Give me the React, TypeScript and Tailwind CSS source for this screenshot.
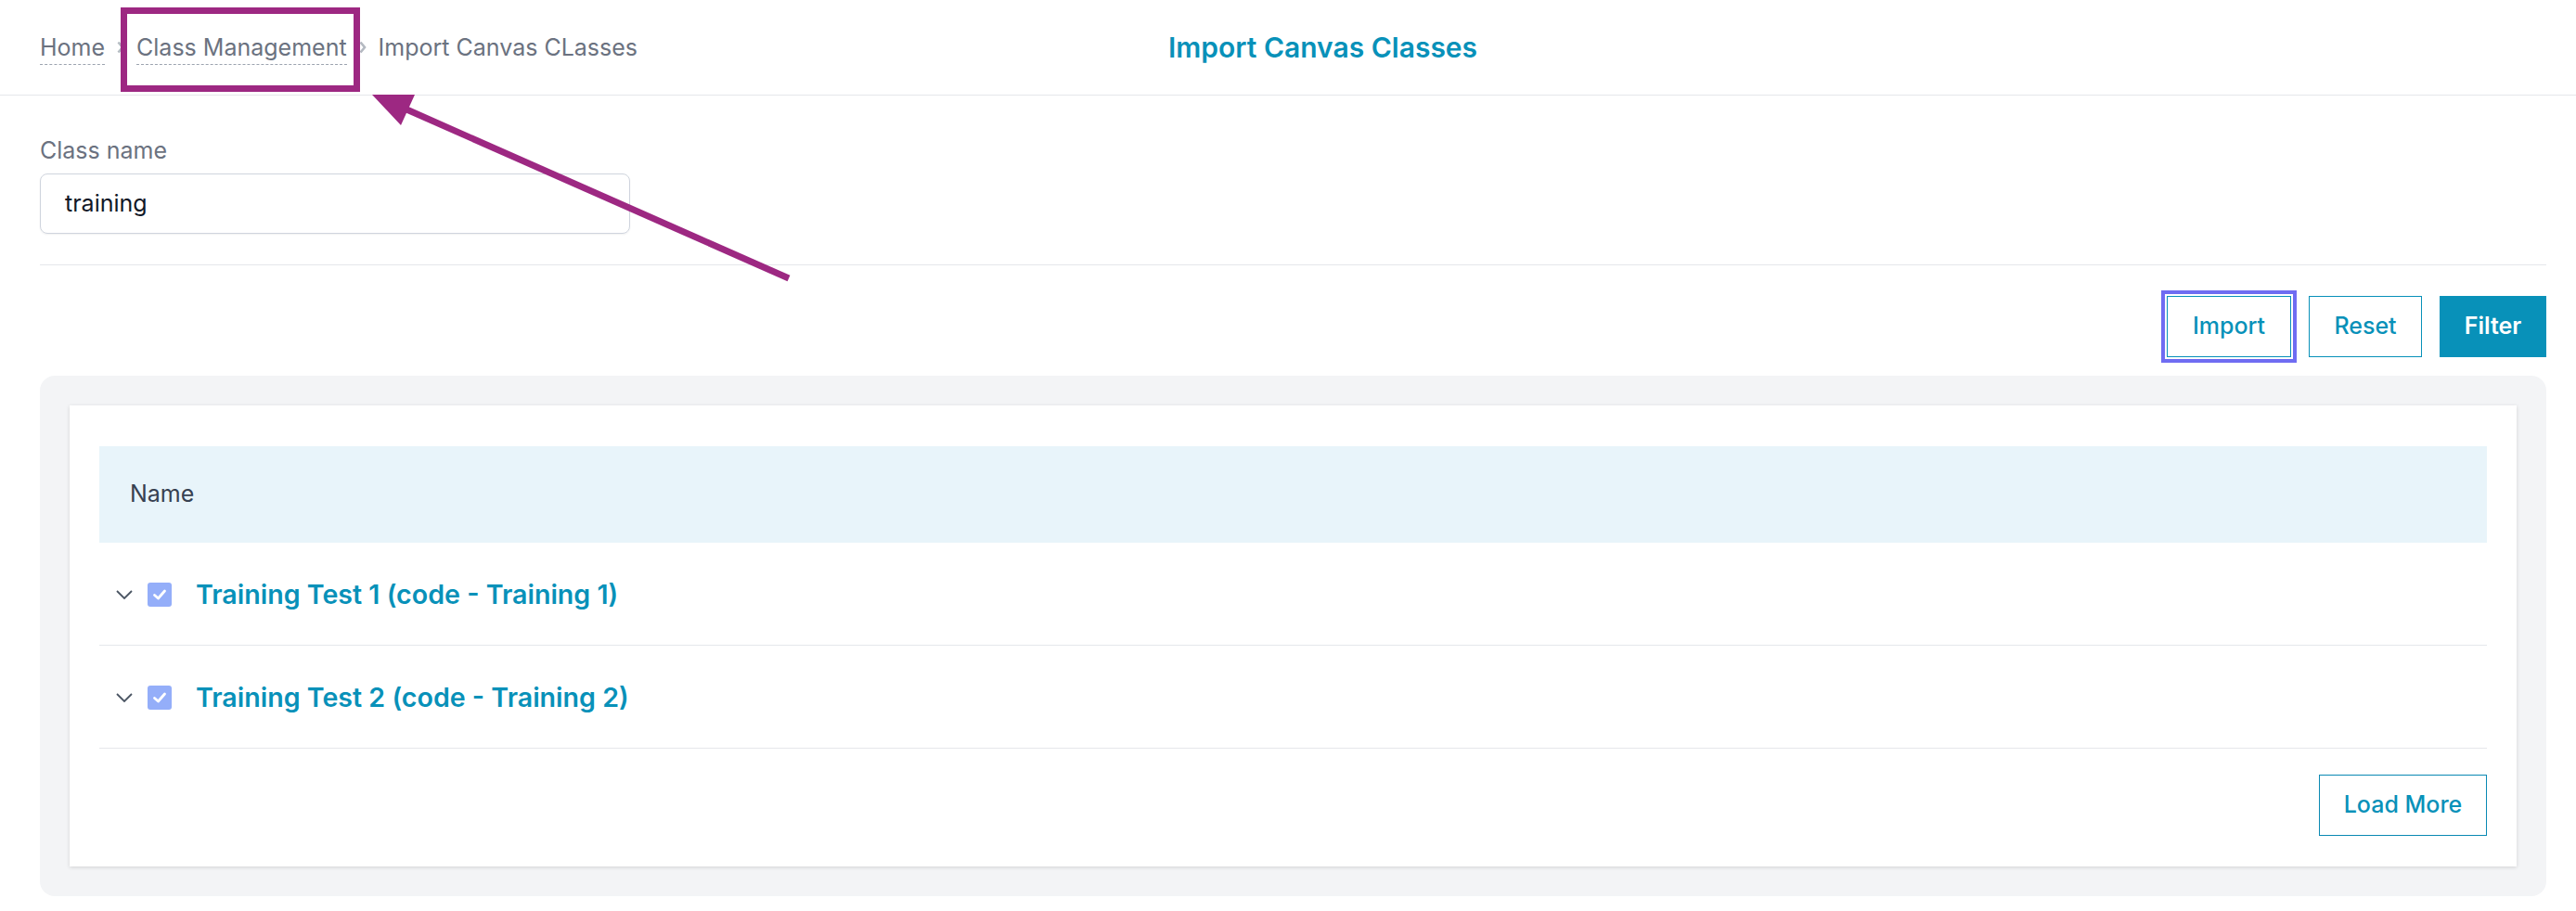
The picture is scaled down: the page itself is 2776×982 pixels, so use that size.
import React from "react";

const Crumb = ({ label, link }: { label: string; link?: boolean }) => (
  <span
    className={`text-[25px] leading-[30px] text-[#6b7280] ${
      link ? "border-b border-dashed border-[#9ca3af] pb-[3px]" : "pb-[4px]"
    }`}
  >
    {label}
  </span>
);

const CrumbSep = () => (
  <svg width="8" height="14" viewBox="0 0 8 14" className="mx-[13px] mb-[4px] shrink-0">
    <polyline points="1.5,1.5 6,7 1.5,12.5" fill="none" stroke="#b4b9c1" strokeWidth="2.6" />
  </svg>
);

const ClassRow = ({ title }: { title: string }) => (
  <div className="flex h-[111px] items-center border-b border-[#e5e7eb] pl-[18px] pt-[2px]">
    <svg width="18" height="10" viewBox="0 0 18 10" className="shrink-0">
      <polyline points="1,1 9,9 17,1" fill="none" stroke="#4b5563" strokeWidth="1.8" />
    </svg>
    <span className="ml-[16px] flex h-[26px] w-[26px] shrink-0 items-center justify-center rounded-[3px] bg-[#94aef9]">
      <svg width="16" height="14" viewBox="0 0 16 14">
        <polyline points="2.5,7.5 6.5,11 13.5,3" fill="none" stroke="#ffffff" strokeWidth="2.8" strokeLinecap="round" strokeLinejoin="round" />
      </svg>
    </span>
    <span className="ml-[26px] text-[28.6px] font-semibold leading-[36px] text-[#0891b9]">{title}</span>
  </div>
);

export default function App() {
  const rows = ["Training Test 1 (code - Training 1)", "Training Test 2 (code - Training 2)"];

  return (
    <div className="relative min-h-screen w-full bg-white font-['Inter',sans-serif]">
      {/* top bar */}
      <header className="flex h-[103px] items-center border-b border-[#e5e7eb] pl-[43px] pr-[32px]">
        <nav className="mt-[4px] flex w-[1216px] shrink-0 items-center">
          <Crumb label="Home" link />
          <CrumbSep />
          <Crumb label="Class Management" link />
          <CrumbSep />
          <Crumb label="Import Canvas CLasses" />
        </nav>
        <h1 className="text-[30px] font-semibold leading-[40px] text-[#0891b9]">Import Canvas Classes</h1>
      </header>

      <main className="pl-[43px] pr-[32px]">
        <div className="pt-[44px]">
          <label className="block text-[25px] leading-[30px] text-[#6b7280]">Class name</label>
          <div className="mt-[10px] flex h-[65px] w-[636px] items-center rounded-[8px] border border-[#cfd4dd] pl-[26px] shadow-[0_1px_2px_rgba(0,0,0,0.06)]">
            <span className="text-[25px] text-[#111827]">training</span>
          </div>
        </div>

        <div className="mt-[33px] border-t border-[#e5e7eb]" />

        <div className="mt-[33px] flex justify-end gap-[19px]">
          <button className="h-[66px] w-[134px] border border-[#0891b9] bg-white text-[25px] font-medium text-[#0891b9] outline-[4px] outline-offset-[2px] outline-[#6f6cf2] [outline-style:solid]">
            Import
          </button>
          <button className="h-[66px] w-[122px] border border-[#0891b9] bg-white text-[25px] font-medium text-[#0891b9]">
            Reset
          </button>
          <button className="h-[66px] w-[115px] bg-[#0891b9] text-[25px] font-semibold text-white">
            Filter
          </button>
        </div>

        <section className="mt-[20px] rounded-[16px] bg-[#f3f4f6] p-[32px]">
          <div className="bg-white px-[32px] pb-[33px] pt-[44px] shadow-[0_1px_4px_rgba(0,0,0,0.14)]">
            <div className="flex h-[104px] items-center bg-[#e8f4fa] pl-[33px]">
              <span className="text-[25px] text-[#374151]">Name</span>
            </div>
            {rows.map((r) => (
              <ClassRow key={r} title={r} />
            ))}
            <div className="mt-[28px] flex justify-end">
              <button className="h-[66px] w-[181px] border border-[#0a89b3] bg-white text-[25px] font-medium text-[#0891b9]">
                Load More
              </button>
            </div>
          </div>
        </section>
      </main>

      {/* annotation overlay */}
      <div className="pointer-events-none absolute left-[130px] top-[8px] h-[91px] w-[258px] border-[7px] border-[#9d2882]" />
      <svg
        className="pointer-events-none absolute left-0 top-0"
        width="2776"
        height="982"
        viewBox="0 0 2776 982"
      >
        <line x1="436" y1="117" x2="850" y2="300" stroke="#9d2882" strokeWidth="7" />
        <polygon points="401,102 447,102 432,135" fill="#9d2882" />
      </svg>
    </div>
  );
}
